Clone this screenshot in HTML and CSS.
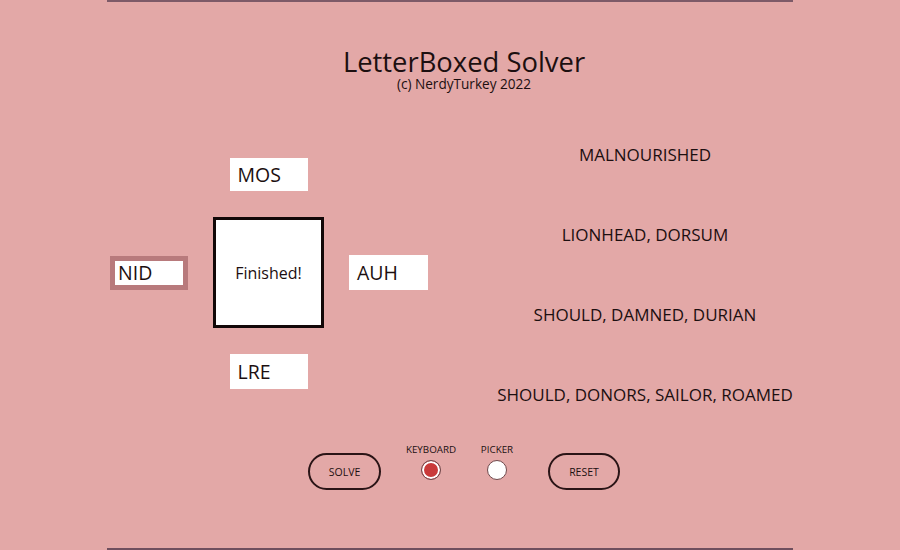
FILE: index.html
```html
<!DOCTYPE html>
<html lang="en">
<head>
  <meta charset="UTF-8">
  <meta name="viewport" content="width=device-width, initial-scale=1.0">
  <title>LetterBoxed Solver</title>
  <link rel="stylesheet" href="styles.css">
</head>
<body>

  <div class="app">
    <div class="header">
      <div class="title">LetterBoxed Solver</div>
      <div class="credit">(c) NerdyTurkey 2022</div>
    </div>

    <div class="main">
      <div class="board">
        <div class="cell"></div>
        <div class="side side-top">MOS</div>
        <div class="cell"></div>

        <div class="side side-left active"><span>NID</span></div>
        <div class="status">Finished!</div>
        <div class="side side-right">AUH</div>

        <div class="cell"></div>
        <div class="side side-bottom">LRE</div>
        <div class="cell"></div>
      </div>

      <div class="results">
        <div class="result">MALNOURISHED</div>
        <div class="result">LIONHEAD, DORSUM</div>
        <div class="result">SHOULD, DAMNED, DURIAN</div>
        <div class="result">SHOULD, DONORS, SAILOR, ROAMED</div>
      </div>
    </div>

    <div class="controls">
      <button class="pill">SOLVE</button>
      <div class="radio-group">
        <div class="radio-label">KEYBOARD</div>
        <div class="radio checked"></div>
      </div>
      <div class="radio-group">
        <div class="radio-label">PICKER</div>
        <div class="radio"></div>
      </div>
      <button class="pill pill-reset">RESET</button>
    </div>
  </div>

</body>
</html>
```

FILE: styles.css
```css
body {
  margin: 0;
  background-color: #e3a8a7;
  font-family: 'Open Sans', 'Noto Sans', sans-serif;
  color: #1c0f10;
}

.app {
  width: 686px;
  height: 546px;
  margin: 0 auto 0 107px;
  border-top: 2px solid #7d5a68;
  border-bottom: 2px solid #6f4f5e;
  display: flex;
  flex-direction: column;
}

.header {
  padding-top: 45px;
  padding-left: 28px;
  text-align: center;
}

.title {
  font-size: 27.4px;
  line-height: 30px;
}

.credit {
  font-size: 13.6px;
  line-height: 14px;
}

.main {
  display: flex;
  margin-top: 52px;
  height: 296px;
}

.board {
  display: grid;
  grid-template-columns: 78px 111px 79px;
  grid-template-rows: 33px 111px 35px;
  column-gap: 25px;
  row-gap: 26px;
  margin-left: 3px;
  margin-top: 15px;
  align-items: center;
}

.side {
  background-color: #fff;
  font-size: 19.5px;
  display: flex;
  align-items: center;
  padding-left: 8px;
  height: 100%;
  box-sizing: border-box;
}

.side-top,
.side-bottom {
  width: 78px;
  justify-self: center;
}

.side-right {
  height: 35px;
}

.side-left {
  height: 34px;
}

.active {
  background-color: #b87a7c;
  padding: 5px;
}

.active span {
  background-color: #fff;
  display: block;
  width: 100%;
  height: 100%;
  padding-left: 3px;
  line-height: 24px;
}

.status {
  height: 111px;
  box-sizing: border-box;
  border: 3px solid #120808;
  background-color: #fff;
  display: flex;
  align-items: center;
  justify-content: center;
  font-size: 16px;
}

.results {
  flex: 1;
  margin-left: 69px;
  display: flex;
  flex-direction: column;
  align-items: center;
  gap: 56px;
}

.result {
  font-size: 17px;
  line-height: 24px;
  white-space: nowrap;
}

.controls {
  display: flex;
  align-items: flex-end;
  margin-left: 201px;
  margin-top: 5px;
}

.pill {
  width: 73px;
  height: 37px;
  border: 2px solid #2a1416;
  border-radius: 19px;
  background: transparent;
  font-family: inherit;
  font-size: 10.5px;
  color: #1c0f10;
  padding: 0;
}

.pill-reset {
  width: 72px;
  margin-left: 18px;
}

.radio-group {
  width: 66px;
  display: flex;
  flex-direction: column;
  align-items: center;
}

.radio-group:first-of-type {
  margin-left: 17px;
}

.radio-label {
  font-size: 9.8px;
  line-height: 12px;
}

.radio {
  width: 18px;
  height: 18px;
  border-radius: 50%;
  border: 1px solid #6f4a4d;
  background-color: #fff;
  margin-top: 4px;
  margin-bottom: 10px;
}

.radio.checked {
  background-color: #c93a3a;
  box-shadow: inset 0 0 0 2px #fff;
}
```
